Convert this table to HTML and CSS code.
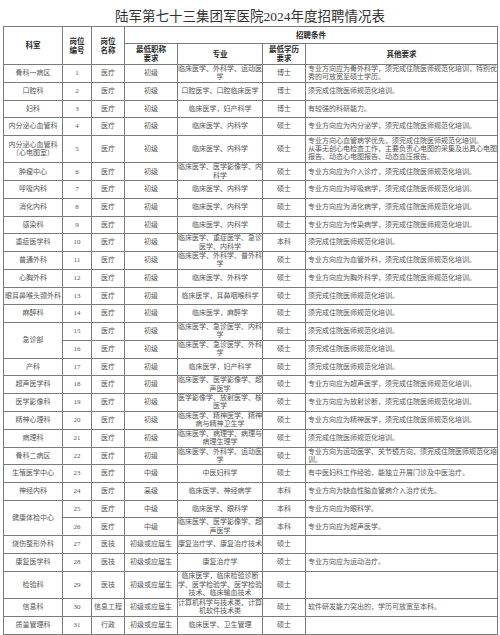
FILE: index.html
```html
<!DOCTYPE html>
<html lang="zh-CN">
<head>
<meta charset="utf-8">
<title>招聘情况表</title>
<link rel="stylesheet" href="styles.css">
</head>
<body>
<div class="title">陆军第七十三集团军医院2024年度招聘情况表</div>
<table class="sheet">
<colgroup>
<col class="c1"><col class="c2"><col class="c3"><col class="c4"><col class="c5"><col class="c6"><col class="c7">
</colgroup>
<thead>
<tr class="ha"><th rowspan="2">科室</th><th rowspan="2">岗位<br>编号</th><th rowspan="2">岗位<br>名称</th><th colspan="4">招聘条件</th></tr>
<tr class="hb"><th>最低职称<br>要求</th><th>专业</th><th>最低学历<br>要求</th><th>其他要求</th></tr>
</thead>
<tbody>
<tr><td>骨科一病区</td><td>1</td><td>医疗</td><td>初级</td><td>临床医学、外科学、运动医<br>学</td><td>博士</td><td class="o">专业方向应为骨外科学，须完成住院医师规范化培训，特别优<br>秀的可放宽至硕士学历。</td></tr>
<tr><td>口腔科</td><td>2</td><td>医疗</td><td>初级</td><td>口腔医学、口腔临床医学</td><td>博士</td><td class="o">须完成住院医师规范化培训。</td></tr>
<tr><td>妇科</td><td>3</td><td>医疗</td><td>初级</td><td>临床医学，妇产科学</td><td>博士</td><td class="o">有较强的科研能力。</td></tr>
<tr><td>内分泌心血管科</td><td>4</td><td>医疗</td><td>初级</td><td>临床医学、内科学</td><td>硕士</td><td class="o">专业方向应为内分泌学，须完成住院医师规范化培训。</td></tr>
<tr class="tall"><td>内分泌心血管科<br>（心电图室）</td><td>5</td><td>医疗</td><td>初级</td><td>临床医学、内科学</td><td>硕士</td><td class="o">专业方向心血管病学优先，须完成住院医师规范化培训。<br>从事无创心电检查工作，主要负责心电图的采集及出具心电图<br>报告、动态心电图报告、动态血压报告。</td></tr>
<tr><td>肿瘤中心</td><td>6</td><td>医疗</td><td>初级</td><td>临床医学、医学影像学、内<br>科学</td><td>硕士</td><td class="o">专业方向应为介入诊疗，须完成住院医师规范化培训。</td></tr>
<tr><td>呼吸内科</td><td>7</td><td>医疗</td><td>初级</td><td>临床医学、内科学</td><td>硕士</td><td class="o">专业方向应为呼吸病学，须完成住院医师规范化培训。</td></tr>
<tr><td>消化内科</td><td>8</td><td>医疗</td><td>初级</td><td>临床医学、内科学</td><td>硕士</td><td class="o">专业方向应为消化病学，须完成住院医师规范化培训。</td></tr>
<tr><td>感染科</td><td>9</td><td>医疗</td><td>初级</td><td>临床医学、内科学</td><td>硕士</td><td class="o">专业方向应为传染病学，须完成住院医师规范化培训。</td></tr>
<tr><td>重症医学科</td><td>10</td><td>医疗</td><td>初级</td><td>临床医学、重症医学、急诊<br>医学、内科学</td><td>本科</td><td class="o">须完成住院医师规范化培训。</td></tr>
<tr><td>普通外科</td><td>11</td><td>医疗</td><td>初级</td><td>临床医学、外科学、普外科<br>学</td><td>硕士</td><td class="o">专业方向应为血管外科，须完成住院医师规范化培训。</td></tr>
<tr><td>心胸外科</td><td>12</td><td>医疗</td><td>初级</td><td>临床医学、外科学</td><td>硕士</td><td class="o">专业方向应为胸外科学，须完成住院医师规范化培训。</td></tr>
<tr><td>眼耳鼻喉头颈外科</td><td>13</td><td>医疗</td><td>初级</td><td>临床医学，耳鼻咽喉科学</td><td>硕士</td><td class="o">须完成住院医师规范化培训。</td></tr>
<tr><td>麻醉科</td><td>14</td><td>医疗</td><td>初级</td><td>临床医学，麻醉学</td><td>硕士</td><td class="o">须完成住院医师规范化培训。</td></tr>
<tr><td rowspan="2">急诊部</td><td>15</td><td>医疗</td><td>初级</td><td>临床医学、急诊医学、内科<br>学</td><td>硕士</td><td class="o">须完成住院医师规范化培训。</td></tr>
<tr><td>16</td><td>医疗</td><td>初级</td><td>临床医学、急诊医学、外科<br>学</td><td>硕士</td><td class="o">须完成住院医师规范化培训。</td></tr>
<tr><td>产科</td><td>17</td><td>医疗</td><td>初级</td><td>临床医学，妇产科学</td><td>硕士</td><td class="o">须完成住院医师规范化培训。</td></tr>
<tr><td>超声医学科</td><td>18</td><td>医疗</td><td>初级</td><td>临床医学、医学影像学、超<br>声医学</td><td>硕士</td><td class="o">专业方向应为超声医学，须完成住院医师规范化培训。</td></tr>
<tr><td>医学影像科</td><td>19</td><td>医疗</td><td>初级</td><td>医学影像学、放射医学、核<br>医学</td><td>硕士</td><td class="o">专业方向应为放射诊断，须完成住院医师规范化培训。</td></tr>
<tr><td>精神心理科</td><td>20</td><td>医疗</td><td>初级</td><td>临床医学、精神医学、精神<br>病与精神卫生学</td><td>硕士</td><td class="o">专业方向应为精神医学，须完成住院医师规范化培训。</td></tr>
<tr><td>病理科</td><td>21</td><td>医疗</td><td>初级</td><td>临床医学、病理学、病理与<br>病理生理学</td><td>硕士</td><td class="o">须完成住院医师规范化培训。</td></tr>
<tr><td>骨科二病区</td><td>22</td><td>医疗</td><td>初级</td><td>临床医学、外科学、运动医<br>学</td><td>硕士</td><td class="o">专业方向为运动医学、关节镜方向，须完成住院医师规范化培<br>训。</td></tr>
<tr><td>生殖医学中心</td><td>23</td><td>医疗</td><td>中级</td><td>中医妇科学</td><td>硕士</td><td class="o">有中医妇科工作经验，能独立开展门诊及中医治疗。</td></tr>
<tr><td>神经内科</td><td>24</td><td>医疗</td><td>高级</td><td>临床医学、神经病学</td><td>本科</td><td class="o">专业方向为缺血性脑血管病介入治疗优先。</td></tr>
<tr><td rowspan="2">健康体检中心</td><td>25</td><td>医疗</td><td>中级</td><td>临床医学、眼科学</td><td>本科</td><td class="o">专业方向应为眼科学。</td></tr>
<tr><td>26</td><td>医疗</td><td>中级</td><td>临床医学、医学影像学、超<br>声医学</td><td>本科</td><td class="o">专业方向应为超声医学。</td></tr>
<tr><td>烧伤整形外科</td><td>27</td><td>医技</td><td>初级或应届生</td><td>康复治疗学、康复治疗技术</td><td>硕士</td><td class="o"></td></tr>
<tr><td>康复医学科</td><td>28</td><td>医技</td><td>初级或应届生</td><td>康复治疗学</td><td>硕士</td><td class="o">专业方向应为运动治疗。</td></tr>
<tr class="tall"><td>检验科</td><td>29</td><td>医技</td><td>初级或应届生</td><td>临床医学，临床检验诊断<br>学、医学检验学、医学检验<br>技术、临床输血技术</td><td>硕士</td><td class="o"></td></tr>
<tr><td>信息科</td><td>30</td><td>信息工程</td><td>初级或应届生</td><td>计算机科学与技术类、计算<br>机软件技术类</td><td>硕士</td><td class="o">软件研发能力突出的，学历可放宽至本科。</td></tr>
<tr><td>质量管理科</td><td>31</td><td>行政</td><td>初级或应届生</td><td>临床医学、卫生管理</td><td>硕士</td><td class="o"></td></tr>
</tbody>
</table>
</body>
</html>
```

FILE: styles.css
```css
html, body {
  margin: 0;
  padding: 0;
  background: #ffffff;
}

body {
  font-family: "Liberation Serif", "Noto Sans CJK SC", serif;
  color: #555555;
}

.title {
  height: 26px;
  box-sizing: border-box;
  padding-top: 4px;
  display: flex;
  align-items: center;
  justify-content: center;
  font-size: 13.5px;
  color: #333333;
}

.sheet {
  margin-left: 3px;
  width: 494px;
  table-layout: fixed;
  border-collapse: collapse;
  border: 1px solid #555555;
}

.c1 { width: 59px; }
.c2 { width: 29px; }
.c3 { width: 33px; }
.c4 { width: 53px; }
.c5 { width: 85px; }
.c6 { width: 43px; }
.c7 { width: 192px; }

.sheet th,
.sheet td {
  border: 1px solid #7a7a7a;
  padding: 0;
  text-align: center;
  vertical-align: middle;
  white-space: nowrap;
  overflow: hidden;
}

.sheet th {
  font-size: 7.5px;
  line-height: 9px;
  font-weight: 700;
  color: #2a2a2a;
}

.ha th { height: 16px; }
.hb th { height: 20px; }

.sheet td {
  font-size: 7px;
  line-height: 8.4px;
  height: 16.7px;
}

.sheet .tall td { height: 26.5px; }

.sheet td.o {
  text-align: left;
  padding-left: 2px;
}
```
